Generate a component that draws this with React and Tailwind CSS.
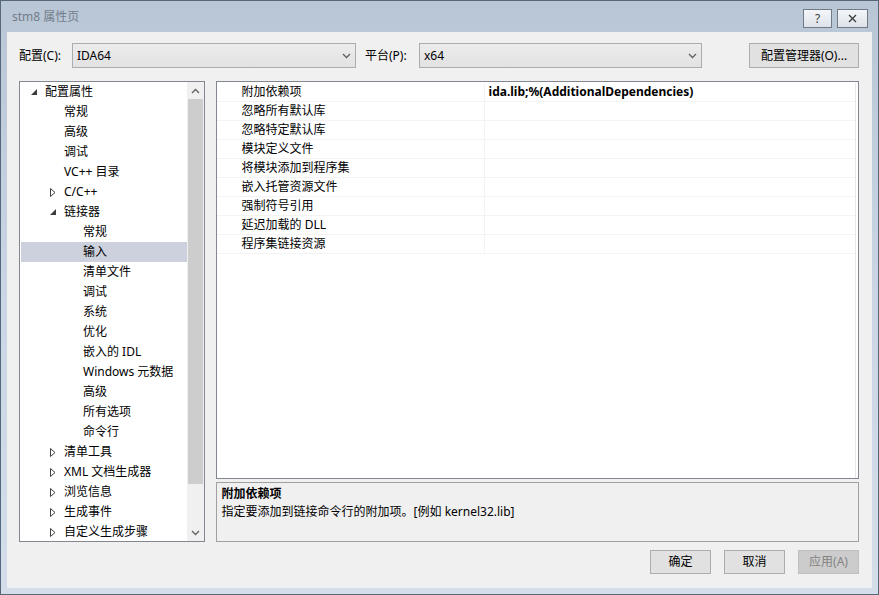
import React from "react";

const FONT = { fontFamily: '"Noto Sans", "Noto Sans CJK SC", sans-serif' };

// tree rows: depth 0 = root, 1 = group, 2 = leaf under 链接器
const treeItems = [
  { label: "配置属性", depth: 0, state: "open" },
  { label: "常规", depth: 1 },
  { label: "高级", depth: 1 },
  { label: "调试", depth: 1 },
  { label: "VC++ 目录", depth: 1 },
  { label: "C/C++", depth: 1, state: "closed" },
  { label: "链接器", depth: 1, state: "open" },
  { label: "常规", depth: 2 },
  { label: "输入", depth: 2, selected: true },
  { label: "清单文件", depth: 2 },
  { label: "调试", depth: 2 },
  { label: "系统", depth: 2 },
  { label: "优化", depth: 2 },
  { label: "嵌入的 IDL", depth: 2 },
  { label: "Windows 元数据", depth: 2 },
  { label: "高级", depth: 2 },
  { label: "所有选项", depth: 2 },
  { label: "命令行", depth: 2 },
  { label: "清单工具", depth: 1, state: "closed" },
  { label: "XML 文档生成器", depth: 1, state: "closed" },
  { label: "浏览信息", depth: 1, state: "closed" },
  { label: "生成事件", depth: 1, state: "closed" },
  { label: "自定义生成步骤", depth: 1, state: "closed" },
];

const properties = [
  { name: "附加依赖项", value: "ida.lib;%(AdditionalDependencies)" },
  { name: "忽略所有默认库", value: "" },
  { name: "忽略特定默认库", value: "" },
  { name: "模块定义文件", value: "" },
  { name: "将模块添加到程序集", value: "" },
  { name: "嵌入托管资源文件", value: "" },
  { name: "强制符号引用", value: "" },
  { name: "延迟加载的 DLL", value: "" },
  { name: "程序集链接资源", value: "" },
];

function Chevron({ up }) {
  return (
    <svg width="9" height="6" viewBox="0 0 9 6" className="shrink-0">
      <path
        d={up ? "M1 5 L4.5 1.5 L8 5" : "M1 1 L4.5 4.5 L8 1"}
        fill="none"
        stroke="#606060"
        strokeWidth="1.3"
      />
    </svg>
  );
}

function Expander({ state }) {
  if (state === "open") {
    return (
      <svg width="6" height="6" viewBox="0 0 6 6">
        <path d="M6 0 L6 6 L0 6 Z" fill="#3c3c3c" />
      </svg>
    );
  }
  return (
    <svg width="6" height="9" viewBox="0 0 6 9">
      <path d="M0.5 0.5 L5 4.5 L0.5 8.5 Z" fill="none" stroke="#404040" strokeWidth="1" />
    </svg>
  );
}

function Combo({ value, width }) {
  return (
    <div
      className={`flex h-[25px] items-center justify-between border border-[#acacac] bg-gradient-to-b from-[#ececec] to-[#e2e2e2] pl-[4px] pr-[4px] text-[12px] text-black ${width}`}
    >
      <span>{value}</span>
      <Chevron />
    </div>
  );
}

function DialogButton({ children, disabled }) {
  return (
    <div
      className={`flex h-[24px] w-[61px] items-center justify-center border text-[12px] ${
        disabled
          ? "border-[#bfbfbf] bg-[#cccccc] text-[#838383]"
          : "border-[#adadad] bg-[#e1e1e1] text-black"
      }`}
    >
      {children}
    </div>
  );
}

function TreeRow({ item }) {
  const indent = item.depth === 0 ? "pl-[10px]" : item.depth === 1 ? "pl-[29px]" : "pl-[48px]";
  return (
    <div
      className={`flex h-[20px] shrink-0 items-center ${indent} ${
        item.selected ? "bg-[#cdd1dd]" : ""
      }`}
    >
      <span className="flex w-[14px] items-center">
        {item.state && <Expander state={item.state} />}
      </span>
      <span className="whitespace-nowrap text-[12px] text-black">{item.label}</span>
    </div>
  );
}

export default function App() {
  return (
    <div
      style={FONT}
      className="flex h-[595px] w-[879px] flex-col overflow-hidden border border-[#566779] bg-gradient-to-b from-[#b9c6d6] via-[#cad6e5] to-[#d3deea]"
    >
      {/* caption */}
      <div className="flex h-[31px] shrink-0 items-center justify-between pl-[11px] pr-[10px]">
        <span className="text-[12px] text-[#737d8a]">stm8 属性页</span>
        <div className="flex gap-[5px] pt-[4px]">
          <div className="flex h-[19px] w-[29px] items-center justify-center border border-[#707a86] bg-gradient-to-b from-[#f4f6f9] to-[#dde3ea] text-[12px] text-[#3a3a3a]">
            ?
          </div>
          <div className="flex h-[19px] w-[31px] items-center justify-center border border-[#707a86] bg-gradient-to-b from-[#f4f6f9] to-[#dde3ea]">
            <svg width="9" height="9" viewBox="0 0 9 9">
              <path d="M1 1 L8 8 M8 1 L1 8" stroke="#3a3a3a" strokeWidth="1.3" />
            </svg>
          </div>
        </div>
      </div>

      {/* client area */}
      <div className="mx-[6px] mb-[6px] flex flex-1 flex-col bg-[#f0f0f0] pl-[12px] pr-[13px]">
        <div className="mt-[11px] flex h-[25px] items-center text-[12px] text-black">
          <span className="w-[53px]">配置(C):</span>
          <Combo value="IDA64" width="w-[284px]" />
          <span className="ml-[9px] w-[54px]">平台(P):</span>
          <Combo value="x64" width="w-[283px]" />
          <div className="ml-auto flex h-[25px] w-[110px] items-center justify-center border border-[#adadad] bg-[#e1e1e1]">
            配置管理器(O)...
          </div>
        </div>

        <div className="mt-[13px] flex gap-[11px]">
          {/* category tree */}
          <div className="flex h-[461px] w-[186px] border border-[#828790] bg-white">
            <div className="flex flex-1 flex-col overflow-hidden pl-[1px]">
              {treeItems.map((item, i) => (
                <TreeRow key={i} item={item} />
              ))}
            </div>
            <div className="flex w-[17px] flex-col bg-[#f0f0f0]">
              <div className="flex h-[17px] items-center justify-center">
                <Chevron up />
              </div>
              <div className="mx-[1px] h-[385px] bg-[#cdcdcd]" />
              <div className="flex-1" />
              <div className="flex h-[17px] items-center justify-center">
                <Chevron />
              </div>
            </div>
          </div>

          {/* property grid + description */}
          <div className="flex w-[645px] flex-col gap-[3px]">
            <div className="h-[398px] border border-[#828790] bg-white pr-[2px] pt-[1px]">
              <div className="h-full border-r border-[#e8e8e8]">
                {properties.map((p, i) => (
                  <div key={i} className="flex h-[19px] border-b border-[#f3f3f3] text-[12px]">
                    <div className="w-[21px] shrink-0" />
                    <div className="flex w-[247px] shrink-0 items-center border-r border-[#f3f3f3] pl-[4px] text-black">
                      {p.name}
                    </div>
                    <div className="flex items-center pl-[4px] font-bold text-black">{p.value}</div>
                  </div>
                ))}
              </div>
            </div>
            <div className="flex h-[60px] flex-col border border-[#a0a0a0] bg-[#f0f0f0] pl-[5px] pt-[2px] text-[12px] leading-[18px] text-black">
              <span className="font-bold">附加依赖项</span>
              <span>指定要添加到链接命令行的附加项。[例如 kernel32.lib]</span>
            </div>
          </div>
        </div>

        <div className="mt-[8px] flex justify-end gap-[13px]">
          <DialogButton>确定</DialogButton>
          <DialogButton>取消</DialogButton>
          <DialogButton disabled>应用(A)</DialogButton>
        </div>
      </div>
    </div>
  );
}
